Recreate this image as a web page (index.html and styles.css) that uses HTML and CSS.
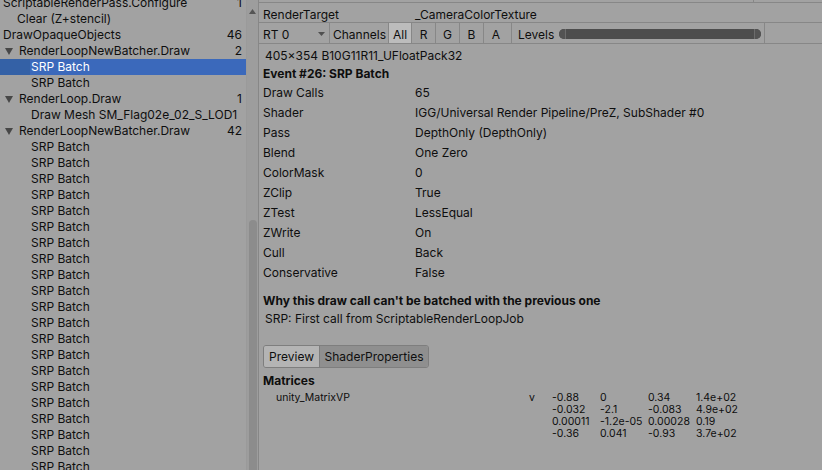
FILE: index.html
```html
<!DOCTYPE html>
<html>
<head>
<meta charset="utf-8">
<link rel="stylesheet" href="styles.css">
</head>
<body>
<div class="app">
  <div class="left">
    <div class="tree">
      <div class="row lv0"><span class="name">ScriptableRenderPass.Configure</span><span class="count">1</span></div>
      <div class="row lv1"><span class="name">Clear (Z+stencil)</span></div>
      <div class="row lv0"><span class="name">DrawOpaqueObjects</span><span class="count">46</span></div>
      <div class="row lv1a"><svg class="tri" width="8" height="7" viewBox="0 0 8 7"><polygon points="0,0 8,0 4,7" /></svg><span class="name">RenderLoopNewBatcher.Draw</span><span class="count">2</span></div>
      <div class="row lv2 sel"><span class="name">SRP Batch</span></div>
      <div class="row lv2"><span class="name">SRP Batch</span></div>
      <div class="row lv1a"><svg class="tri" width="8" height="7" viewBox="0 0 8 7"><polygon points="0,0 8,0 4,7" /></svg><span class="name">RenderLoop.Draw</span><span class="count">1</span></div>
      <div class="row lv2"><span class="name">Draw Mesh SM_Flag02e_02_S_LOD1</span></div>
      <div class="row lv1a"><svg class="tri" width="8" height="7" viewBox="0 0 8 7"><polygon points="0,0 8,0 4,7" /></svg><span class="name">RenderLoopNewBatcher.Draw</span><span class="count">42</span></div>
      <div class="row lv2"><span class="name">SRP Batch</span></div>
      <div class="row lv2"><span class="name">SRP Batch</span></div>
      <div class="row lv2"><span class="name">SRP Batch</span></div>
      <div class="row lv2"><span class="name">SRP Batch</span></div>
      <div class="row lv2"><span class="name">SRP Batch</span></div>
      <div class="row lv2"><span class="name">SRP Batch</span></div>
      <div class="row lv2"><span class="name">SRP Batch</span></div>
      <div class="row lv2"><span class="name">SRP Batch</span></div>
      <div class="row lv2"><span class="name">SRP Batch</span></div>
      <div class="row lv2"><span class="name">SRP Batch</span></div>
      <div class="row lv2"><span class="name">SRP Batch</span></div>
      <div class="row lv2"><span class="name">SRP Batch</span></div>
      <div class="row lv2"><span class="name">SRP Batch</span></div>
      <div class="row lv2"><span class="name">SRP Batch</span></div>
      <div class="row lv2"><span class="name">SRP Batch</span></div>
      <div class="row lv2"><span class="name">SRP Batch</span></div>
      <div class="row lv2"><span class="name">SRP Batch</span></div>
      <div class="row lv2"><span class="name">SRP Batch</span></div>
      <div class="row lv2"><span class="name">SRP Batch</span></div>
      <div class="row lv2"><span class="name">SRP Batch</span></div>
      <div class="row lv2"><span class="name">SRP Batch</span></div>
    </div>
    <div class="scrollbar">
      <svg class="up" width="7" height="5" viewBox="0 0 7 5"><polygon points="3.5,0 7,5 0,5" /></svg>
      <div class="thumb"></div>
    </div>
  </div>
  <div class="right">
    <div class="topstrip"><div class="topcell"></div></div>
    <div class="rtrow"><span class="rtlabel">RenderTarget</span><span>_CameraColorTexture</span></div>
    <div class="toolbar">
      <div class="rtsel"><span>RT 0</span><svg class="dd" width="7" height="4" viewBox="0 0 7 4"><polygon points="0,0 7,0 3.5,4" /></svg></div>
      <span class="chlabel">Channels</span>
      <div class="chbtn on">All</div>
      <div class="chbtn">R</div>
      <div class="chbtn">G</div>
      <div class="chbtn">B</div>
      <div class="chbtn wide">A</div>
      <div class="levels">
        <span>Levels</span>
        <div class="slider"><div class="cap"></div><div class="bar"></div><div class="cap"></div></div>
      </div>
    </div>
    <div class="content">
      <div class="fmt">405x354 B10G11R11_UFloatPack32</div>
      <div class="event">Event #26: SRP Batch</div>
      <div class="props">
        <span>Draw Calls</span><span>65</span>
        <span>Shader</span><span>IGG/Universal Render Pipeline/PreZ, SubShader #0</span>
        <span>Pass</span><span>DepthOnly (DepthOnly)</span>
        <span>Blend</span><span>One Zero</span>
        <span>ColorMask</span><span>0</span>
        <span>ZClip</span><span>True</span>
        <span>ZTest</span><span>LessEqual</span>
        <span>ZWrite</span><span>On</span>
        <span>Cull</span><span>Back</span>
        <span>Conservative</span><span>False</span>
      </div>
      <div class="why">Why this draw call can't be batched with the previous one</div>
      <div class="reason">SRP: First call from ScriptableRenderLoopJob</div>
      <div class="tabs"><div class="tab">Preview</div><div class="tab active">ShaderProperties</div></div>
      <div class="section">Matrices</div>
      <div class="matrix">
        <span class="mname">unity_MatrixVP</span>
        <span class="mflag">v</span>
        <div class="mvals">
          <span>-0.88</span><span>0</span><span>0.34</span><span>1.4e+02</span>
          <span>-0.032</span><span>-2.1</span><span>-0.083</span><span>4.9e+02</span>
          <span>0.00011</span><span>-1.2e-05</span><span>0.00028</span><span>0.19</span>
          <span>-0.36</span><span>0.041</span><span>-0.93</span><span>3.7e+02</span>
        </div>
      </div>
    </div>
  </div>
</div>
</body>
</html>
```

FILE: styles.css
```css
* { box-sizing: border-box; }
html, body {
  margin: 0;
  padding: 0;
  width: 822px;
  height: 470px;
  overflow: hidden;
  background: #a2a2a2;
  color: #0e0e0e;
  font-family: Inter, "Noto Sans", "DejaVu Sans", sans-serif;
  font-size: 12px;
}
.app {
  display: flex;
  height: 470px;
}
.left {
  display: flex;
  width: 259px;
  flex: none;
  border-right: 1px solid #878787;
}
.tree {
  width: 246px;
  overflow: hidden;
  margin-top: -5px;
}
.row {
  height: 16px;
  line-height: 16px;
  display: flex;
  align-items: center;
  white-space: nowrap;
  padding-right: 4px;
}
.row .name { flex: 1; }
.row .count { text-align: right; }
.lv0 { padding-left: 3px; }
.lv1 { padding-left: 17px; }
.lv1a { padding-left: 5px; }
.lv2 { padding-left: 31px; }
.tri {
  fill: #474747;
  margin-right: 6px;
  flex: none;
}
.sel {
  background: linear-gradient(to right, #3461a6 0, #3461a6 30px, #3b69bb 30px);
  color: #ffffff;
}
.scrollbar {
  width: 12px;
  border-left: 1px solid #9a9a9a;
  background: #9d9d9d;
  display: flex;
  flex-direction: column;
  align-items: center;
}
.up {
  fill: #555555;
  margin-top: 9px;
}
.thumb {
  margin-top: 206px;
  width: 8px;
  flex: 1;
  background: #8c8c8c;
  border-radius: 4px 4px 0 0;
}
.right {
  flex: 1;
  display: flex;
  flex-direction: column;
}
.topstrip {
  height: 3px;
  border-bottom: 1px solid #878787;
}
.topcell {
  width: 495px;
  height: 2px;
  border-right: 1px solid #878787;
}
.rtrow {
  height: 20px;
  border-bottom: 1px solid #878787;
  display: flex;
  align-items: center;
  padding-left: 4px;
  padding-top: 3px;
}
.rtlabel { width: 152px; }
.toolbar {
  height: 21px;
  border-bottom: 1px solid #878787;
  display: flex;
  align-items: stretch;
}
.toolbar > * { padding-top: 2px; }
.rtsel {
  width: 71px;
  border-right: 1px solid #878787;
  display: flex;
  align-items: center;
  justify-content: space-between;
  padding-left: 4px;
  padding-right: 4px;
}
.dd { fill: #505050; }
.chlabel {
  display: flex;
  align-items: center;
  padding-left: 3px;
  width: 58px;
}
.chbtn {
  width: 24px;
  border-right: 1px solid #878787;
  display: flex;
  align-items: center;
  justify-content: center;
}
.chbtn.on {
  background: #bcbcbc;
  border-left: 1px solid #878787;
}
.chbtn.wide { width: 28px; padding-right: 3px; }
.levels {
  width: 253px;
  border-right: 1px solid #878787;
  display: flex;
  align-items: center;
  padding-left: 6px;
}
.slider {
  margin-left: 5px;
  width: 202px;
  height: 10px;
  display: flex;
  border-radius: 5px;
  overflow: hidden;
  background: #4f4f4f;
}
.slider .cap { width: 6px; background: #535353; }
.slider .bar {
  flex: 1;
  border-left: 1px solid #6c6c6c;
  border-right: 1px solid #6c6c6c;
  background: #4d4d4d;
}
.content {
  padding-left: 4px;
}
.fmt {
  height: 18px;
  line-height: 18px;
  margin-top: 3px;
  padding-left: 2px;
}
.event {
  height: 18px;
  line-height: 18px;
  font-weight: 700;
}
.props {
  display: grid;
  grid-template-columns: 152px 1fr;
  grid-auto-rows: 20px;
  line-height: 20px;
}
.why {
  margin-top: 9px;
  height: 18px;
  line-height: 18px;
  font-weight: 700;
}
.reason {
  height: 18px;
  line-height: 18px;
  padding-left: 2px;
}
.tabs {
  margin-top: 17px;
  display: flex;
  width: 166px;
  height: 23px;
  border: 1px solid #7e7e7e;
  border-radius: 3px;
  overflow: hidden;
}
.tab {
  display: flex;
  align-items: center;
  justify-content: center;
  background: #b4b4b4;
  width: 56px;
  border-right: 1px solid #7e7e7e;
}
.tab.active {
  flex: 1;
  background: #8f8f8f;
  border-right: none;
}
.section {
  margin-top: 5px;
  font-weight: 700;
  height: 16px;
  line-height: 16px;
}
.matrix {
  display: flex;
  font-size: 10.5px;
  line-height: 12px;
  margin-top: 3px;
}
.mname {
  padding-left: 13px;
  width: 266px;
}
.mflag { width: 23px; }
.mvals {
  display: grid;
  grid-template-columns: repeat(4, 48px);
  grid-auto-rows: 12px;
}
```
